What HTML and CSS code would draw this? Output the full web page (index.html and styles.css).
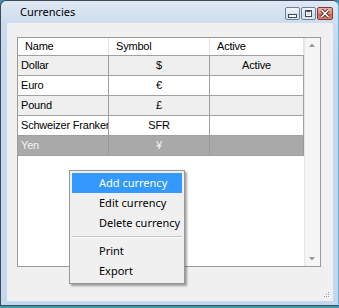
FILE: index.html
```html
<!DOCTYPE html>
<html>
<head>
<meta charset="utf-8">
<title>Currencies</title>
<link rel="stylesheet" href="styles.css">
</head>
<body>
<div class="window">
  <div class="titlebar">
    <span class="title">Currencies</span>
    <div class="buttons">
      <span class="btn"><svg width="13" height="11" viewBox="0 0 13 11"><rect x="2.5" y="6.5" width="8" height="3" fill="#fff" stroke="#3d4a5c"/></svg></span>
      <span class="btn"><svg width="13" height="11" viewBox="0 0 13 11"><rect x="3.5" y="2.5" width="6" height="6" fill="none" stroke="#3d4a5c"/><rect x="4.5" y="3.5" width="4" height="4" fill="none" stroke="#fff"/><rect x="4.5" y="3" width="4" height="1" fill="#3d4a5c"/></svg></span>
      <span class="btn close"><svg width="14" height="11" viewBox="0 0 14 11"><path d="M3.5 2 L10.5 9 M10.5 2 L3.5 9" stroke="#5a2420" stroke-width="3.2"/><path d="M3.5 2 L10.5 9 M10.5 2 L3.5 9" stroke="#fff" stroke-width="1.6"/></svg></span>
    </div>
  </div>
  <div class="client">
    <div class="grid">
      <div class="table">
        <div class="row head">
          <div class="c name">Name</div><div class="c sym">Symbol</div><div class="c act">Active</div>
        </div>
        <div class="row alt">
          <div class="c name">Dollar</div><div class="c sym">$</div><div class="c act">Active</div>
        </div>
        <div class="row">
          <div class="c name">Euro</div><div class="c sym">€</div><div class="c act"></div>
        </div>
        <div class="row alt">
          <div class="c name">Pound</div><div class="c sym">£</div><div class="c act"></div>
        </div>
        <div class="row">
          <div class="c name">Schweizer Franken</div><div class="c sym">SFR</div><div class="c act"></div>
        </div>
        <div class="row sel last">
          <div class="c name">Yen</div><div class="c sym">¥</div><div class="c act"></div>
        </div>
      </div>
      <div class="vscroll">
        <svg class="arr" width="16" height="16" viewBox="0 0 16 16"><path d="M5 9 L11 9 L8 5.5 Z" fill="#9a9a9a"/></svg>
        <svg class="arr" width="16" height="16" viewBox="0 0 16 16"><path d="M5 7 L11 7 L8 10.5 Z" fill="#9a9a9a"/></svg>
      </div>
    </div>
    <svg class="grip" width="7" height="7" viewBox="0 0 7 7">
      <rect x="5" y="0" width="1" height="1" fill="#a0a0a0"/>
      <rect x="3" y="2" width="1" height="1" fill="#a0a0a0"/><rect x="5" y="2" width="1" height="1" fill="#a0a0a0"/>
      <rect x="1" y="4" width="1" height="1" fill="#a0a0a0"/><rect x="3" y="4" width="1" height="1" fill="#a0a0a0"/><rect x="5" y="4" width="1" height="1" fill="#a0a0a0"/>
      <rect x="6" y="1" width="1" height="1" fill="#fff"/>
      <rect x="4" y="3" width="1" height="1" fill="#fff"/><rect x="6" y="3" width="1" height="1" fill="#fff"/>
      <rect x="2" y="5" width="1" height="1" fill="#fff"/><rect x="4" y="5" width="1" height="1" fill="#fff"/><rect x="6" y="5" width="1" height="1" fill="#fff"/>
    </svg>
  </div>
</div>
<div class="menu">
  <div class="item hot">Add currency</div>
  <div class="item">Edit currency</div>
  <div class="item">Delete currency</div>
  <div class="sep"></div>
  <div class="item">Print</div>
  <div class="item">Export</div>
</div>
</body>
</html>
```
FILE: styles.css
```css
html, body {
  margin: 0;
  padding: 0;
}
body {
  width: 339px;
  height: 308px;
  overflow: hidden;
  position: relative;
  background: #3e97ad;
  font-family: "Liberation Sans", Arial, sans-serif;
}
.window {
  box-sizing: border-box;
  width: 339px;
  height: 306px;
  border: 1px solid #3b4b5d;
  border-right-color: #5fb8d6;
  border-radius: 6px 6px 0 0;
  background: linear-gradient(#dfe8f3 0, #cddcee 22px, #c4d7ec 60px, #c4d7ec 100%);
  padding: 0 5px 4px 6px;
  display: flex;
  flex-direction: column;
}
.titlebar {
  height: 22px;
  flex: none;
  display: flex;
  justify-content: space-between;
  align-items: flex-start;
}
.title {
  font-family: "Noto Sans", "Open Sans", sans-serif;
  font-size: 11px;
  line-height: 16px;
  margin: 3px 0 0 13px;
  color: #000;
}
.buttons {
  display: flex;
  margin-top: 6px;
  gap: 1px;
}
.btn {
  box-sizing: border-box;
  width: 15px;
  height: 13px;
  border: 1px solid #6f7f96;
  border-radius: 2px;
  background: linear-gradient(#f4f7fb, #dbe4ef 50%, #cfdbea 51%, #dfe8f3);
  display: flex;
  align-items: center;
  justify-content: center;
}
.btn.close {
  width: 16px;
  border-color: #7a3c36;
  background: linear-gradient(#eab5aa, #d98878 50%, #c8604f 51%, #d98070);
}
.client {
  flex: 1;
  background: #f0f0f0;
  display: flex;
  flex-direction: column;
  padding: 14px 12px 0 10px;
}
.grid {
  box-sizing: border-box;
  width: 304px;
  height: 230px;
  border: 1px solid #9b9b9b;
  background: #fff;
  display: flex;
}
.table {
  width: 286px;
  display: flex;
  flex-direction: column;
}
.row {
  display: flex;
  height: 20px;
  border-top: 1px solid #a0a0a0;
  box-sizing: border-box;
  font-size: 11px;
  line-height: 19px;
  letter-spacing: -0.2px;
  color: #000;
}
.row.head {
  height: 17px;
  border-top: none;
  line-height: 17px;
  background: #fff;
}
.row.last {
  height: 21px;
  border-bottom: 1px solid #a0a0a0;
}
.row.alt { background: #efefef; }
.row.sel { background: #a9a9a9; color: #f4f4f4; }
.c {
  box-sizing: border-box;
  border-right: 1px solid #a0a0a0;
  white-space: nowrap;
  overflow: hidden;
}
.head .c { border-right-color: #e2e2e2; padding-left: 7px; text-align: left; }
.name { width: 91px; padding-left: 3px; }
.sym { width: 101px; text-align: center; }
.act { width: 94px; text-align: center; }
.sel .c { border-right-color: #999; }
.vscroll {
  width: 16px;
  border-left: 1px solid #e6e6e6;
  background: #f5f5f5;
  display: flex;
  flex-direction: column;
  justify-content: space-between;
}
.arr { display: block; margin-left: -1px; }
.grip {
  margin-top: auto;
  margin-bottom: 2px;
  align-self: flex-end;
  margin-right: -9px;
}
.menu {
  position: absolute;
  left: 69px;
  top: 170px;
  box-sizing: border-box;
  width: 116px;
  border: 1px solid #979797;
  background: #f0f0f0;
  padding: 2px;
  box-shadow: 2px 2px 2px rgba(0,0,0,0.35);
  font-family: "Noto Sans", "Open Sans", sans-serif;
  font-size: 11px;
}
.item {
  height: 20px;
  line-height: 20px;
  padding-left: 27px;
  color: #000;
  white-space: nowrap;
}
.item.hot {
  background: #3399ff;
  color: #fff;
}
.sep {
  height: 1px;
  margin: 3px 0 3px 0;
  border-top: 1px solid #c5c5c5;
  background: #fff;
}
```
